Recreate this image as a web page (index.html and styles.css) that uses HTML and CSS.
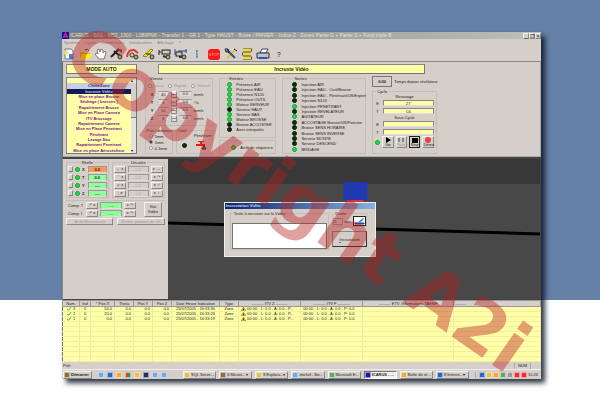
FILE: index.html
```html
<!DOCTYPE html>
<html lang="fr">
<head>
    <meta charset="UTF-8">
    <meta name="viewport" content="width=device-width, initial-scale=1.0">
    <title>ICARUS</title>
    <link rel="stylesheet" href="styles.css">
</head>
<body>
    <main class="window">
        <header class="titlebar">
            <svg class="logo" viewBox="0 0 6 6"><rect width="6" height="6" fill="#1010b0"/><path d="M1 5L3 1L5 5M1 4H5" stroke="#e03050" fill="none"/></svg>
            <span class="title">ICARUS - SG1 - M52_1300 - L080PNK - Transfer 1 - GR 1 - Type HAUST - Butée / PANIER - Indice Z - Zones Partie G + Partie S + Fond triple B</span>
            <button type="button">_</button><button type="button">❐</button><button type="button">×</button>
        </header>
        <nav class="menu">
            <a href="#">Système</a><a href="#">Cycles</a><a href="#">Commandes</a><a href="#">Initialisations</a><a href="#">Affichage</a><a href="#">?</a>
        </nav>

        <div class="toolbar">
            <button type="button" aria-label="Nouveau"><svg viewBox="0 0 14 12"><path d="M3 1H9L11 3V11H3Z" fill="#fff" stroke="#5a78a8"/><path d="M1 3L5 2L7 5L3 7Z" fill="#f0e060"/><path d="M7 6H11V11H7Z" fill="#4880c8"/></svg></button>
            <button type="button" aria-label="Ouvrir"><svg viewBox="0 0 14 12"><path d="M2 4H6L7 5H12V11H2Z" fill="#d8c000"/><path d="M4 6H14L12 11H2Z" fill="#ffee20"/><path d="M7 2Q10 0 11 3" stroke="#444" fill="none"/></svg></button>
            <button type="button" aria-label="Main"><svg viewBox="0 0 14 12"><path d="M5 11L1 6L3 5L4 6L3 2L5 1L6 4L7 1L9 2V5L11 3L12 5L10 11Z" fill="#fff" stroke="#777"/></svg></button>
            <button type="button" aria-label="Outil"><svg viewBox="0 0 14 12"><path d="M1 9L9 1M4 3L11 9" stroke="#222" stroke-width="2"/><path d="M8 2L12 1V5Z" fill="#555"/><circle cx="10" cy="9" r="2" fill="#a0b060" stroke="#333"/></svg></button>
            <button type="button" aria-label="Pénétrant"><svg viewBox="0 0 14 12"><path d="M1 9Q2 1 8 2L12 5" stroke="#e03030" stroke-width="2" fill="none"/><circle cx="6" cy="7" r="2" fill="#eed850" stroke="#333"/><circle cx="10" cy="9" r="2" fill="#a0b060" stroke="#333"/></svg></button>
            <button type="button" aria-label="Brosse"><svg viewBox="0 0 14 12"><path d="M1 8L9 1L11 2L4 9Z" fill="#ffe820" stroke="#8a8000"/><path d="M4 6H9" stroke="#222"/><circle cx="10" cy="9" r="2" fill="#a0b060" stroke="#333"/></svg></button>
            <button type="button" aria-label="Caméra"><svg viewBox="0 0 14 12"><path d="M1 2V7M1 4H3" stroke="#222"/><rect x="4" y="2" width="8" height="4" fill="#ccc" stroke="#222"/><circle cx="10" cy="9" r="2" fill="#a0b060" stroke="#333"/><path d="M5 8L8 9" stroke="#333" stroke-width="2"/></svg></button>
            <button type="button" aria-label="Mesure"><svg viewBox="0 0 14 12"><path d="M1 1V7M4 3H13M12 1V5" stroke="#234a90"/><rect x="2" y="4" width="6" height="4" fill="#ccc" stroke="#222"/><circle cx="10" cy="9" r="2" fill="#a0b060" stroke="#333"/><path d="M5 9L8 9" stroke="#333" stroke-width="2"/></svg></button>
            <button type="button" aria-label="Information"><svg viewBox="0 0 14 12"><path d="M6 5H7V9M6 9H8" stroke="#2a78d0" fill="none"/><circle cx="7" cy="3" r="1" fill="#2a78d0"/></svg></button>
            <button type="button" class="stop">STOP</button>
            <button type="button" aria-label="Réglages"><svg viewBox="0 0 14 12"><path d="M3 10L11 2" stroke="#e8c828" stroke-width="2"/><path d="M3 2L11 10" stroke="#30508c" stroke-width="2"/><path d="M1 1L4 1L5 4L2 4ZM10 1L13 3" stroke="#223" fill="none"/></svg></button>
            <button type="button" aria-label="Listes"><svg viewBox="0 0 14 12"><path d="M3 2H12M2 6H11M3 10H12" stroke="#554c20" stroke-width="3"/><path d="M3 2H11M3 6H11M3 10H11" stroke="#f0dc30" stroke-width="2"/></svg></button>
            <button type="button" aria-label="Imprimer"><svg viewBox="0 0 14 12"><path d="M4 5L6 1H12L10 5Z" fill="#fff" stroke="#446"/><path d="M1 5H13V10H1Z" fill="#b8c4d8" stroke="#333"/><path d="M3 10H11" stroke="#3058a8" stroke-width="2"/></svg></button>
            <button type="button" class="help">?</button>
        </div>

        <section class="panel">
            <div class="col-list">
                <div class="mode sunk">MODE AUTO</div>
                <div class="list sunk">
                    <ul>
                        <li></li>
                        <li>Choix Zone</li>
                        <li class="selected">Incruste Vidéo</li>
                        <li>Mise en place Brosse</li>
                        <li>Séchage ( brosses )</li>
                        <li>Rapatriement Brosse</li>
                        <li>Mise en Place Camera</li>
                        <li>ITV Brossage</li>
                        <li>Rapatriement Camera</li>
                        <li>Mise en Place Penetrant</li>
                        <li>Pénétrant</li>
                        <li>Lavage Eau</li>
                        <li>Rapatriement Penetrant</li>
                        <li>Mise en place Aérosécheur</li>
                    </ul>
                    <div class="scroll"><span>▴</span><i></i><span>▾</span></div>
                </div>
            </div>

            <div class="col-main">
                <h1 class="step sunk">Incruste Vidéo</h1>
                <div class="groups">
                    <div class="col-speed">
                        <fieldset class="speed">
                            <legend>Vitesse</legend>
                            <div class="modes">
                                <label><input type="radio" name="speed" disabled>Local</label>
                                <label><input type="radio" name="speed" disabled>Rapide</label>
                                <label><input type="radio" name="speed" disabled>Manuel</label>
                            </div>
                            <div class="axis"><label for="vx">X</label><input id="vx" value="40"><button type="button" aria-label="Pas X"></button><output>0.0</output><span>mm/s</span></div>
                            <div class="axis"><label for="vt">T</label><input id="vt" value="6"><button type="button" aria-label="Pas T"></button><output>0.0</output><span>°/s</span></div>
                            <div class="axis"><label for="vy">Y</label><input id="vy" value="10"><button type="button" aria-label="Pas Y"></button><output>0.0</output><span>mm/s</span></div>
                            <div class="axis"><label for="vz">Z</label><input id="vz" value="6"><button type="button" aria-label="Pas Z"></button><output>0.0</output><span>mm/s</span></div>
                        </fieldset>
                        <div class="speed-bottom">
                            <fieldset class="step-size">
                                <legend>Pas / distance</legend>
                                <label><input type="radio" name="pas">5mm</label>
                                <label><input type="radio" name="pas" checked>1mm</label>
                                <label><input type="radio" name="pas">0.1mm</label>
                            </fieldset>
                            <fieldset class="tool">
                                <legend>Outil</legend>
                                <span>Pénétrant</span>
                                <div><i class="led"></i><svg viewBox="0 0 12 10"><path d="M1 4H5V2H3V1H9V2H7V4H10V7H8V6H1Z" fill="#f01818"/><path d="M7 9L9 6L11 9Z" fill="#888" stroke="#222"/></svg></div>
                            </fieldset>
                        </div>
                    </div>

                    <div class="col-in">
                        <fieldset class="signals">
                            <legend>Entrées</legend>
                            <ul>
                                <li><i class="led on"></i>Présence AIR</li>
                                <li><i class="led on"></i>Présence EAU</li>
                                <li><i class="led on"></i>Présence N120</li>
                                <li><i class="led on"></i>Présence OUTIL</li>
                                <li><i class="led on"></i>Moteur SERVEUR</li>
                                <li><i class="led"></i>Serveur HAUT</li>
                                <li><i class="led on"></i>Serveur BAS</li>
                                <li><i class="led on"></i>Moteur BROSSE</li>
                                <li><i class="led"></i>Brosse ACCOSTEE</li>
                                <li><i class="led"></i>Axes interpolés</li>
                            </ul>
                        </fieldset>
                        <div class="sequence"><i class="led on"></i>Arrêt de séquence</div>
                    </div>

                    <fieldset class="signals out">
                        <legend>Sorties</legend>
                        <ul>
                            <li><i class="led"></i>Injection AIR</li>
                            <li><i class="led"></i>Injection EAU - Outil/Brosse</li>
                            <li><i class="led"></i>Injection EAU - Pénétrant/US/Expert</li>
                            <li><i class="led"></i>Injection N120</li>
                            <li><i class="led on"></i>Injection PENETRANT</li>
                            <li><i class="led"></i>Injection REVELATEUR</li>
                            <li><i class="led on"></i>AGITATEUR</li>
                            <li><i class="led"></i>ACCOSTAGE Brosse/US/Poncine</li>
                            <li><i class="led"></i>Brosse SENS HORAIRE</li>
                            <li><i class="led"></i>Brosse SENS INVERSE</li>
                            <li><i class="led"></i>Serveur MONTE</li>
                            <li><i class="led"></i>Serveur DESCEND</li>
                            <li><i class="led on"></i>BRIDAGE</li>
                        </ul>
                    </fieldset>

                    <div class="col-cycle">
                        <div class="timer"><output>0.00</output><span>Temps depuis révélateur</span></div>
                        <fieldset class="cycle">
                            <legend>Cycle</legend>
                            <b>Ressuage</b>
                            <label>E<input value="27"></label>
                            <label>T<input value="C6"></label>
                            <b>Sous Cycle</b>
                            <label>E<input value=""></label>
                            <label>T<input value=""></label>
                            <div class="player">
                                <i class="led on"></i>
                                <button type="button"><svg viewBox="0 0 8 6"><path d="M2 0L7 3L2 6Z"/></svg>Go</button>
                                <button type="button" disabled><svg viewBox="0 0 8 6"><path d="M1 1H3V5H1ZM5 1H7V5H5Z" fill="#888"/></svg>Pause</button>
                                <button type="button" class="active"><svg viewBox="0 0 8 6"><path d="M1 1H7V6H1Z"/></svg>Stop</button>
                                <button type="button"><svg viewBox="0 0 8 6"><circle cx="4" cy="3" r="3" fill="#f04040"/></svg>Démo</button>
                            </div>
                        </fieldset>
                    </div>
                </div>
            </div>
        </section>

        <section class="work">
            <aside class="side">
                <div class="pair">
                    <fieldset class="real">
                        <legend>Réelle</legend>
                        <div><button type="button">_</button><i class="led on"></i><b>X</b><output class="hot">0.0</output></div>
                        <div><button type="button">_</button><i class="led on"></i><b>T</b><output>0.0</output></div>
                        <div><button type="button">_</button><i class="led on"></i><b>Y</b><output>----</output></div>
                        <div><button type="button">_</button><i class="led on"></i><b>Z</b><output>----</output></div>
                    </fieldset>
                    <fieldset class="shift">
                        <legend>Décalée</legend>
                        <div><button type="button">← ◂</button><output>0.0</output><button type="button">▸ →</button></div>
                        <div><button type="button">⌒ ◂</button><output>0.0</output><button type="button">▸ ↷</button></div>
                        <div><button type="button">↙ ◂</button><output>0.0</output><button type="button">▸ ↗</button></div>
                        <div><button type="button">↓ ◂</button><output>0.0</output><button type="button">▸ ↑</button></div>
                    </fieldset>
                </div>
                <div class="comp">
                    <div class="comp-rows">
                        <div><span>Comp. T</span><button type="button">↶ ◂</button><output>----</output><button type="button">▸ ↷</button></div>
                        <div><span>Comp. I</span><button type="button">↶ ◂</button><output>----</output><button type="button">▸ ↷</button></div>
                    </div>
                    <button type="button" class="see">Voir<br>Vidéo</button>
                </div>
                <div class="moves">
                    <button type="button" disabled>Arrêt Mouvement</button>
                    <button type="button" disabled>Retour position de ref.</button>
                </div>
            </aside>

            <div class="video">
                <svg class="scene" viewBox="0 0 373 140" preserveAspectRatio="none">
                    <rect width="373" height="140" fill="#484848"/>
                    <rect width="373" height="25" fill="#383838"/>
                    <path d="M0 64L373 75" stroke="#000" stroke-width="3"/>
                    <rect x="176" y="23" width="24" height="18" fill="#2038b0"/>
                    <rect x="179" y="41" width="17" height="3" fill="#e03030"/>
                </svg>
                <form class="dialog">
                    <h2>Incrustation Vidéo</h2>
                    <div class="dialog-body">
                        <fieldset class="note">
                            <legend><label for="note">Texte à incruster sur la Vidéo</label></legend>
                            <textarea id="note"></textarea>
                        </fieldset>
                        <div class="dialog-side">
                            <fieldset>
                                <legend>Durée</legend>
                                <label><input value="5">sec</label>
                                <button type="button" aria-label="Effacer"><svg viewBox="0 0 11 8"><rect width="11" height="8" fill="#fff"/><path d="M1 6H10V7H1Z" fill="#2048b0" stroke="#2048b0"/><path d="M4 5L9 1L10 2L6 6Z" fill="#4890d0"/></svg></button>
                            </fieldset>
                            <button type="button" class="embed"><u>I</u>ncrustation</button>
                        </div>
                    </div>
                </form>
            </div>
        </section>

        <table class="log">
            <colgroup><col class="c-num"><col class="c-ind"><col class="c-x"><col class="c-pos"><col class="c-pos"><col class="c-pos"><col class="c-date"><col class="c-pos"><col class="c-itv"><col class="c-itv"><col class="c-info"><col></colgroup>
            <thead>
                <tr><th>Num.</th><th>Ind</th><th>* Pos X</th><th>Theta</th><th>Pos Y</th><th>Pos Z</th><th>Date Heure Indication</th><th>Type</th><th>--------- ITV Z ---------</th><th>--------- ITV F ---------</th><th>--------- ETV. Informations TAEMF</th><th>---------</th></tr>
            </thead>
            <tbody>
                <tr><td><svg viewBox="0 0 6 5"><path d="M0 3L2 4L5 0" fill="none" stroke="#10b020"/></svg> 3</td><td>0</td><td>50.0</td><td>0.0</td><td>0.0</td><td>0.0</td><td>25/07/2005 - 16:33:30</td><td>Zone</td><td><svg viewBox="0 0 6 5"><path d="M3 0L6 5H0Z" fill="#f0d000" stroke="#555" stroke-width=".5"/><path d="M3 2V4" stroke="#000"/></svg> 00:00 - L: 0.0 - A: 0.0 - P...</td><td>00:00 - L: 0.0 - A: 0.0 - P: 0.0</td><td></td><td></td></tr>
                <tr><td><svg viewBox="0 0 6 5"><path d="M0 3L2 4L5 0" fill="none" stroke="#10b020"/></svg> 2</td><td>0</td><td>20.0</td><td>0.0</td><td>0.0</td><td>0.0</td><td>25/07/2005 - 16:33:26</td><td>Zone</td><td><svg viewBox="0 0 6 5"><path d="M3 0L6 5H0Z" fill="#f0d000" stroke="#555" stroke-width=".5"/><path d="M3 2V4" stroke="#000"/></svg> 00:00 - L: 0.0 - A: 0.0 - P...</td><td>00:00 - L: 0.0 - A: 0.0 - P: 0.0</td><td></td><td></td></tr>
                <tr><td><svg viewBox="0 0 6 5"><path d="M0 3L2 4L5 0" fill="none" stroke="#10b020"/></svg> 1</td><td>0</td><td>0.0</td><td>0.0</td><td>0.0</td><td>0.0</td><td>25/07/2005 - 16:33:19</td><td>Zone</td><td><svg viewBox="0 0 6 5"><path d="M3 0L6 5H0Z" fill="#f0d000" stroke="#555" stroke-width=".5"/><path d="M3 2V4" stroke="#000"/></svg> 00:00 - L: 0.0 - A: 0.0 - P...</td><td>00:00 - L: 0.0 - A: 0.0 - P: 0.0</td><td></td><td></td></tr>
                <tr><td></td><td></td><td></td><td></td><td></td><td></td><td></td><td></td><td></td><td></td><td></td><td></td></tr>
                <tr><td></td><td></td><td></td><td></td><td></td><td></td><td></td><td></td><td></td><td></td><td></td><td></td></tr>
                <tr><td></td><td></td><td></td><td></td><td></td><td></td><td></td><td></td><td></td><td></td><td></td><td></td></tr>
                <tr><td></td><td></td><td></td><td></td><td></td><td></td><td></td><td></td><td></td><td></td><td></td><td></td></tr>
                <tr><td></td><td></td><td></td><td></td><td></td><td></td><td></td><td></td><td></td><td></td><td></td><td></td></tr>
                <tr><td></td><td></td><td></td><td></td><td></td><td></td><td></td><td></td><td></td><td></td><td></td><td></td></tr>
                <tr><td></td><td></td><td></td><td></td><td></td><td></td><td></td><td></td><td></td><td></td><td></td><td></td></tr>
                <tr><td></td><td></td><td></td><td></td><td></td><td></td><td></td><td></td><td></td><td></td><td></td><td></td></tr>
            </tbody>
        </table>

        <div class="status"><span>Prêt</span><span class="num">NUM</span></div>

        <footer class="taskbar">
            <button type="button" class="start"><i class="ico flag"></i>Démarrer</button>
            <div class="quick"><i class="ico sky"></i><i class="ico blue"></i><i class="ico orange"></i><i class="ico flag"></i><i class="ico gold"></i><i class="ico dark"></i><i class="ico sky"></i><i class="ico sky"></i></div>
            <div class="tasks">
                <button type="button"><i class="ico gold"></i>SQL Serve...</button>
                <button type="button"><i class="ico flag"></i>6 Micros...▾</button>
                <button type="button"><i class="ico gold"></i>8 Explora...▾</button>
                <button type="button"><i class="ico sky"></i>michel - Bo...</button>
                <button type="button"><i class="ico green"></i>Microsoft E...</button>
                <button type="button" class="current"><i class="ico navy"></i>ICARUS - ...</button>
                <button type="button"><i class="ico orange"></i>Boîte de ré...</button>
                <button type="button"><i class="ico blue"></i>8 Interne...▾</button>
            </div>
            <div class="tray"><i class="ico blue"></i><i class="ico gold"></i><i class="ico orange"></i><i class="ico green"></i><i class="ico grey"></i><i class="ico red"></i><i class="ico red"></i><span>15:26</span></div>
        </footer>
    </main>

    <svg class="copyright" viewBox="0 0 600 400"><text transform="translate(60 62) rotate(35)">Copyright A2i</text></svg>
</body>
</html>
```

FILE: styles.css
```css
* {
    box-sizing: border-box;
}
body {
    margin: 0;
    min-height: 100vh;
    padding: 32px 59px 20px 62px;
    background: linear-gradient(#6581a8 75%, #fff 75%);
    font-family: "Liberation Sans", Arial, sans-serif;
    font-size: 4px;
    line-height: 5px;
    color: #222;
    position: relative;
}
button, input, textarea, output {
    font: inherit;
    color: inherit;
    margin: 0;
    padding: 0;
    min-width: 0;
}
button {
    background: #d4cec8;
    border: 1px solid;
    border-color: #f4f2ee #888 #888 #f4f2ee;
    white-space: nowrap;
}
button:disabled {
    color: #999;
}
ul {
    list-style: none;
    margin: 0;
    padding: 0;
}
svg {
    display: block;
}
fieldset {
    margin: 0;
    padding: 0 2px;
    border: 1px solid #c4beb8;
    min-width: 0;
}
legend {
    padding: 0 1px;
    margin-left: 1px;
    white-space: nowrap;
}
.window {
    background: #d6cec8;
    box-shadow: 4px 4px 5px rgba(10, 20, 35, 0.85);
}
.sunk {
    border: 1px solid;
    border-color: #888 #777 #777 #888;
    background: #ffffa8;
}

/* barre de titre */
.titlebar {
    display: flex;
    align-items: center;
    height: 7px;
    background: linear-gradient(90deg, #7d7d7d, #c0beba);
    color: #e4e0dc;
    font-size: 5px;
}
.logo {
    width: 7px;
    height: 7px;
    margin-right: 1px;
}
.title {
    flex: 1;
    white-space: nowrap;
}
.titlebar button {
    width: 6px;
    height: 6px;
    color: #111;
    line-height: 4px;
}
.menu {
    display: flex;
    gap: 5px;
    height: 8px;
    padding: 1px 2px;
}
.menu a {
    color: #8a8580;
    text-decoration: none;
}
.toolbar {
    display: flex;
    align-items: center;
    gap: 2px;
    height: 14px;
}
.toolbar button {
    width: 14px;
    height: 12px;
    border: 0;
    background: none;
}
.toolbar svg {
    width: 14px;
    height: 12px;
}
.toolbar .stop {
    width: 12px;
    height: 11px;
    margin: 0 2px;
    border-radius: 3px;
    background: #f81818;
    color: #ffb0b0;
}
.toolbar .help {
    font-size: 7px;
    font-weight: bold;
    color: #554;
}

/* panneau du haut */
.panel {
    display: flex;
    gap: 8px;
    height: 96px;
    padding: 2px 2px 2px 3px;
    border: 1px solid #888;
    border-color: #888 #aaa #aaa #666;
}
.col-list {
    flex: 0 0 15%;
    display: flex;
    flex-direction: column;
    gap: 3px;
}
.mode, .step {
    height: 10px;
    margin: 0;
    font-size: 5px;
    line-height: 8px;
    font-weight: bold;
    text-align: center;
}
.list {
    flex: 1;
    display: flex;
    min-height: 0;
}
.list ul {
    flex: 1;
    display: flex;
    flex-direction: column;
    min-width: 0;
}
.list li {
    flex: 1;
    min-height: 0;
    color: #80108a;
    font-weight: bold;
    text-align: center;
    white-space: nowrap;
}
.list li:nth-child(2) {
    background: #c8d0d8;
    color: #1a3c90;
}
.list .selected {
    background: #101860;
    color: #c8c8e8;
}
.scroll {
    width: 5px;
    display: flex;
    flex-direction: column;
    background: #e6e2de;
    color: #111;
}
.scroll i {
    flex: 1;
    margin-bottom: 30px;
    background: #d6cec8;
    border-bottom: 1px solid #777;
}
.col-main {
    flex: 1;
    display: flex;
    flex-direction: column;
    gap: 2px;
    min-width: 0;
}
.step {
    width: 68%;
    margin-left: 13px;
}
.groups {
    flex: 1;
    display: grid;
    grid-template-columns: 18fr 15fr 22fr 17fr 25fr;
    gap: 6px;
    min-height: 0;
}
.col-speed, .col-in, .col-cycle {
    display: flex;
    flex-direction: column;
    gap: 2px;
    min-width: 0;
}
.speed {
    height: 50px;
}
.modes {
    display: flex;
    justify-content: space-between;
    color: #999;
    height: 9px;
    align-items: center;
}
.modes label, .step-size label {
    display: flex;
    align-items: center;
    gap: 2px;
}
input[type="radio"] {
    appearance: none;
    width: 4px;
    height: 4px;
    border: 1px solid #999;
    border-radius: 50%;
    background: #fff;
}
input[type="radio"]:checked {
    border-color: #999;
    background: #222;
}
.axis {
    display: grid;
    grid-template-columns: 5px 11px 6px 13px 1fr;
    gap: 2px;
    align-items: center;
    height: 8px;
    padding-left: 3px;
}
.axis label {
    font-weight: bold;
}
.axis input, .axis output {
    width: 100%;
    height: 6px;
    border: 1px solid #ccc;
    border-top-color: #999;
    background: #dedad6;
    text-align: center;
    line-height: 4px;
}
.axis button {
    height: 7px;
    border-color: #fff #888 #888 #999;
    background: linear-gradient(#ddd 40%, #888 40%, #888 60%, #ddd 60%);
}
.speed-bottom {
    flex: 1;
    display: grid;
    grid-template-columns: 3fr 4fr;
    gap: 3px;
}
.step-size, .tool {
    padding: 0 1px;
}
.step-size legend, .tool legend {
    margin-left: 0;
    padding: 0;
}
.step-size label {
    height: 6px;
    padding-left: 2px;
}
.tool span {
    display: block;
    text-align: right;
}
.tool div {
    display: flex;
    align-items: center;
    justify-content: space-around;
    padding-top: 2px;
}
.tool svg {
    width: 12px;
    height: 10px;
}
.led {
    flex: none;
    width: 5px;
    height: 5px;
    border-radius: 50%;
    background: #0a3010;
    border: 1px solid #082008;
}
.led.on {
    background: #10e838;
    border-color: #189838;
}
.signals {
    display: flex;
    flex-direction: column;
    padding: 1px 2px 1px 7px;
    white-space: nowrap;
}
.out {
    padding-left: 9px;
}
.signals ul {
    flex: 1;
    display: flex;
    flex-direction: column;
    justify-content: space-between;
}
.signals li, .sequence {
    display: flex;
    align-items: center;
    gap: 4px;
}
.col-in .signals {
    height: 62px;
}
.sequence {
    flex: 1;
    border: 1px solid #c4beb8;
    padding-left: 11px;
    white-space: nowrap;
}
.timer {
    display: flex;
    align-items: center;
    gap: 2px;
    white-space: nowrap;
}
.timer output {
    flex: none;
    width: 20px;
    height: 11px;
    border: 1px solid #777;
    line-height: 9px;
    font-weight: bold;
    text-align: center;
}
.cycle {
    flex: 1;
}
.cycle b {
    display: block;
    font-weight: normal;
    text-align: center;
    height: 5px;
}
.cycle label {
    display: flex;
    align-items: center;
    gap: 4px;
    height: 8px;
    padding-left: 1px;
}
.cycle label input {
    flex: 1;
    height: 6px;
    border: 1px solid #888;
    border-bottom-color: #ddd;
    background: #ffffa8;
    text-align: center;
    line-height: 4px;
}
.player {
    display: flex;
    align-items: center;
    gap: 2px;
}
.player button {
    flex: 1 0 0;
    height: 12px;
    line-height: 4px;
}
.player .active {
    border-color: #222;
}
.player svg {
    width: 8px;
    height: 6px;
    margin: 0 auto;
}

/* zone de travail */
.work {
    display: flex;
    min-height: 143px;
    border: 2px solid #444;
    border-width: 2px 1px 1px;
    border-left-color: #888;
}
.side {
    flex: 0 0 22%;
    padding: 1px 3px;
    background: #d6cec8;
}
.pair {
    display: grid;
    grid-template-columns: 4fr 5fr;
    gap: 3px;
}
.real div, .shift div, .comp-rows div {
    display: flex;
    align-items: center;
    gap: 2px;
    height: 8px;
}
.real legend, .shift legend {
    margin: 0 auto;
}
.real, .shift {
    padding: 0 1px;
}
.real button {
    width: 5px;
    height: 6px;
    line-height: 3px;
}
.real b {
    width: 4px;
}
.real output, .shift output, .comp output {
    flex: 1;
    height: 7px;
    border: 1px solid #999;
    border-bottom-color: #ddd;
    background: #90ff98;
    text-align: center;
    line-height: 5px;
}
.real output {
    font-weight: bold;
}
.real .hot {
    background: #ff9850;
}
.shift output {
    background: #d6cec8;
    color: #aaa;
}
.shift button, .comp-rows button {
    width: 12px;
    height: 7px;
    line-height: 4px;
    color: #555;
}
.comp {
    display: flex;
    align-items: center;
    gap: 8px;
    margin-top: 2px;
    padding: 0 3px 0 2px;
    border-top: 1px solid #c4beb8;
}
.comp-rows {
    flex: 1;
}
.comp-rows span {
    width: 16px;
    white-space: nowrap;
}
.see {
    width: 18px;
    height: 15px;
}
.moves {
    display: grid;
    grid-template-columns: 1fr 1fr;
    gap: 4px;
    padding-top: 1px;
}
.moves button {
    height: 7px;
    line-height: 5px;
}
.video {
    flex: 1;
    position: relative;
    min-width: 0;
}
.scene {
    width: 100%;
    height: 100%;
}
.dialog {
    position: absolute;
    left: 15%;
    top: 43px;
    width: 41%;
    background: #d6cec8;
    border: 1px solid #f0eeea;
}
.dialog h2 {
    margin: 0;
    height: 6px;
    padding-left: 1px;
    background: linear-gradient(90deg, #0a246a, #88b0e0);
    color: #c8d4f0;
    font-size: 4px;
}
.dialog-body {
    display: flex;
    gap: 3px;
    padding: 2px 8px 6px 5px;
}
.note {
    flex: 1;
    padding: 0 1px;
}
.note textarea {
    display: block;
    width: 100%;
    height: 26px;
    margin-top: 7px;
    border: 1px solid #777;
    background: #fff;
    resize: none;
}
.dialog-side {
    width: 35px;
}
.dialog-side fieldset {
    display: flex;
    align-items: center;
    justify-content: space-between;
    padding: 0;
}
.dialog-side label {
    white-space: nowrap;
}
.dialog-side input {
    width: 10px;
    height: 7px;
    margin-right: 1px;
    border: 1px solid #999;
    background: #d6cec8;
}
.dialog-side fieldset button {
    width: 13px;
    height: 10px;
    border-color: #222;
}
.embed {
    width: 100%;
    height: 16px;
    margin-top: 4px;
    border-color: #888 #333 #333 #888;
}

/* journal */
.log {
    width: 100%;
    table-layout: fixed;
    border-collapse: collapse;
    background: #ffffa8;
    border-left: 1px solid #777;
}
.c-num { width: 17px; }
.c-ind { width: 11px; }
.c-x { width: 24px; }
.c-pos { width: 19px; }
.c-date { width: 48px; }
.c-itv { width: 13%; }
.c-info { width: 19%; }
.log th, .log td {
    height: 5px;
    padding: 0 2px;
    font-weight: normal;
    line-height: 4px;
    text-align: center;
    white-space: nowrap;
    border-right: 1px solid #eaeaa0;
    border-bottom: 1px solid #f0f0a0;
}
.log th {
    height: 6px;
    background: #d6cec8;
    border: 1px solid #999;
}
.log td:nth-child(3), .log td:nth-child(4), .log td:nth-child(5), .log td:nth-child(6) {
    text-align: right;
}
.log td:nth-child(9), .log td:nth-child(10) {
    text-align: left;
}
.log th:nth-child(12) {
    text-align: left;
}
.log th, .log td:nth-child(2) {
    padding: 0;
}
.log svg {
    display: inline-block;
    vertical-align: top;
    width: 5px;
    height: 4px;
}
.status {
    display: flex;
    justify-content: space-between;
    height: 7px;
    padding: 1px 10px 0 1px;
}
.num {
    padding: 0 3px;
    border-left: 1px solid #aaa;
    border-right: 1px solid #aaa;
}
.taskbar {
    display: flex;
    align-items: center;
    gap: 6px;
    height: 10px;
    padding: 0 3px 0 1px;
    border-top: 1px solid #eee;
}
.taskbar button {
    display: flex;
    align-items: center;
    gap: 1px;
    height: 8px;
}
.start {
    width: 29px;
    font-weight: bold;
}
.quick {
    display: flex;
    gap: 3px;
}
.tasks {
    flex: 1;
    display: flex;
    gap: 3px;
    margin-left: 10px;
    min-width: 0;
}
.tasks button {
    flex: 1;
}
.taskbar .current {
    background: #f2f0ec;
    border-color: #777 #fff #fff #777;
    font-weight: bold;
}
.tray {
    display: flex;
    align-items: center;
    gap: 1px;
    padding-left: 3px;
    border-left: 1px solid #aaa;
}
.ico {
    flex: none;
    width: 6px;
    height: 6px;
    border-radius: 1px;
    border: 1px solid #fff8;
}
.sky { background: #70a8e0; }
.blue { background: #2868c8; }
.orange { background: #f0a840; }
.gold { background: #e0c050; }
.green { background: #60a868; }
.grey { background: #999; }
.red { background: #e83030; }
.dark { background: #203060; }
.navy { background: #1818a0; }
.flag { background: linear-gradient(90deg, #d84830 50%, #389848 50%); }

.copyright {
    position: absolute;
    top: 0;
    left: 0;
    width: 100%;
    pointer-events: none;
}
.copyright text {
    font-family: "DejaVu Sans", Verdana, sans-serif;
    font-size: 71px;
    font-weight: bold;
    fill: rgba(185, 30, 30, 0.42);
}
```
